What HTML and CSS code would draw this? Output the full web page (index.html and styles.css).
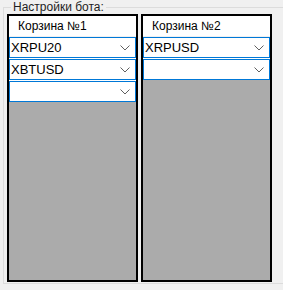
FILE: index.html
```html
<!DOCTYPE html>
<html lang="ru">
<head>
  <meta charset="UTF-8">
  <title>Настройки бота</title>
  <link rel="stylesheet" href="styles.css">
</head>
<body>
  <fieldset class="group">
    <legend class="group-title">Настройки бота:</legend>
    <div class="baskets">
      <div class="basket">
        <div class="basket-head">Корзина №1</div>
        <div class="basket-list">
          <div class="combo"><span class="combo-text">XRPU20</span><svg class="chevron" width="10" height="6" viewBox="0 0 10 6"><path d="M0.5 0.5 L5 5 L9.5 0.5" fill="none" stroke="#606060" stroke-width="1"/></svg></div>
          <div class="combo"><span class="combo-text">XBTUSD</span><svg class="chevron" width="10" height="6" viewBox="0 0 10 6"><path d="M0.5 0.5 L5 5 L9.5 0.5" fill="none" stroke="#606060" stroke-width="1"/></svg></div>
          <div class="combo"><span class="combo-text"></span><svg class="chevron" width="10" height="6" viewBox="0 0 10 6"><path d="M0.5 0.5 L5 5 L9.5 0.5" fill="none" stroke="#606060" stroke-width="1"/></svg></div>
        </div>
      </div>
      <div class="basket">
        <div class="basket-head">Корзина №2</div>
        <div class="basket-list">
          <div class="combo"><span class="combo-text">XRPUSD</span><svg class="chevron" width="10" height="6" viewBox="0 0 10 6"><path d="M0.5 0.5 L5 5 L9.5 0.5" fill="none" stroke="#606060" stroke-width="1"/></svg></div>
          <div class="combo"><span class="combo-text"></span><svg class="chevron" width="10" height="6" viewBox="0 0 10 6"><path d="M0.5 0.5 L5 5 L9.5 0.5" fill="none" stroke="#606060" stroke-width="1"/></svg></div>
        </div>
      </div>
    </div>
  </fieldset>
</body>
</html>
```

FILE: styles.css
```css
html, body {
  margin: 0;
  width: 283px;
  height: 290px;
  overflow: hidden;
  background-color: #f0f0f0;
  font-family: "Liberation Sans", Arial, sans-serif;
  color: #000;
}

.group {
  box-sizing: border-box;
  margin: 0 0 0 3px;
  padding: 0 0 1px 3px;
  width: 280px;
  border: 1px solid #dcdcdc;
  border-right: none;
  min-inline-size: 0;
}

.group-title {
  margin-left: 4px;
  padding: 0 2px;
  font-size: 12px;
  line-height: 14px;
  color: #1e1e1e;
}

.baskets {
  display: flex;
  gap: 3px;
}

.basket {
  box-sizing: border-box;
  width: 131px;
  height: 268px;
  border: 2px solid #000;
  background-color: #ababab;
}

.basket-head {
  height: 20px;
  line-height: 20px;
  padding-left: 9px;
  font-size: 12px;
  background-color: #fff;
  border-bottom: 1px solid #f0f0f0;
}

.basket-list {
  display: flex;
  flex-direction: column;
  gap: 1px;
  background-color: #fff;
}

.combo {
  display: flex;
  align-items: center;
  justify-content: space-between;
  height: 19px;
  border: 1px solid #0078d7;
  background-color: #fff;
  padding: 0 5px 0 1px;
}

.combo-text {
  font-size: 13px;
}

.chevron {
  display: block;
}
```
